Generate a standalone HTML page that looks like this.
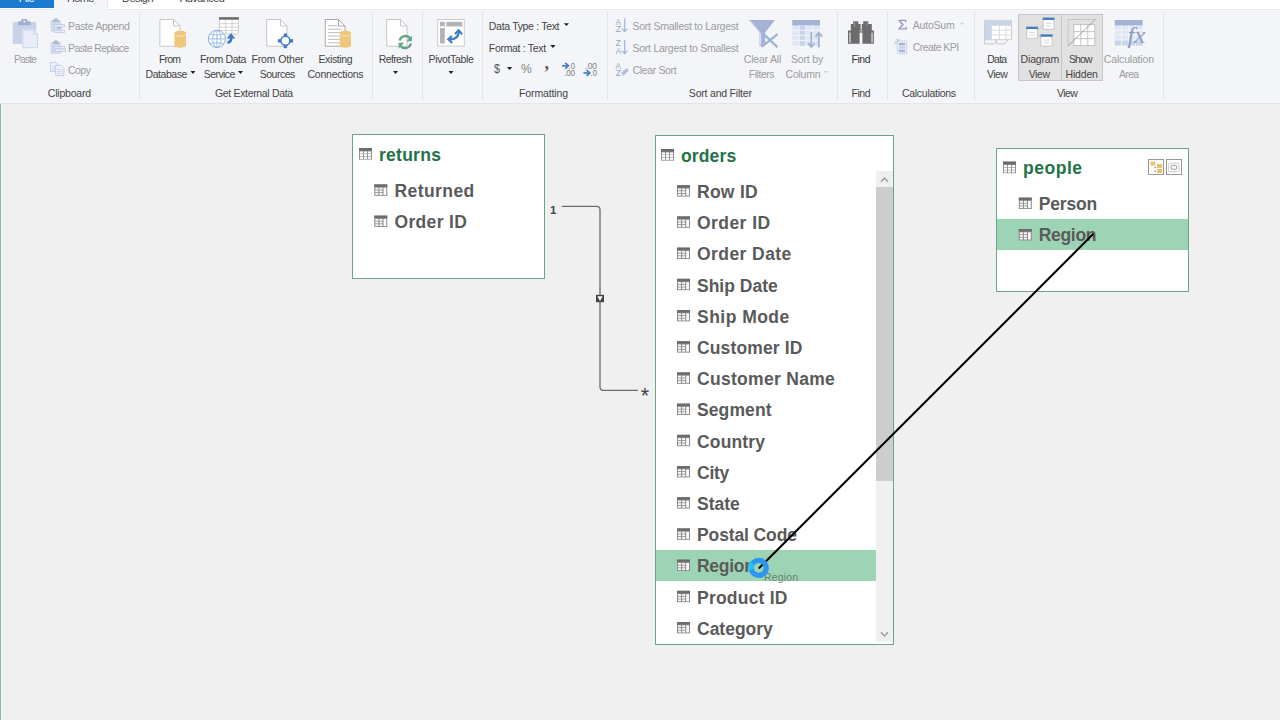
<!DOCTYPE html>
<html lang="en"><head><meta charset="utf-8"><title>Power Pivot - Diagram View</title>
<style>
html,body{margin:0;padding:0}
body{width:1280px;height:720px;overflow:hidden;background:#f0f0f0;position:relative;font-family:"Liberation Sans", sans-serif;}
.t,.g{position:absolute;white-space:pre;display:block}
.abs,svg.ic{position:absolute}
svg.ic{overflow:visible}
#tabs{position:absolute;left:0;top:0;width:1280px;height:9px;background:#fff;border-bottom:1px solid #e6e8eb}
#tab-file{position:absolute;left:0;top:0;width:54px;height:8px;background:#1a7ad0}
#tab-home{position:absolute;left:54px;top:0;width:53px;height:10px;background:#f3f5f8;border-right:1px solid #e6e8eb}
#ribbon{position:absolute;left:0;top:10px;width:1280px;height:93px;background:#f3f5f8;border-bottom:1px solid #e3e5e8}
.sep{position:absolute;top:12px;width:1px;height:88px;background:#e2e4e7}
.tog{position:absolute;top:14px;height:67px;background:#e1e1e1;border:1px solid #c6c6c6;box-sizing:border-box}
#canvas{position:absolute;left:0;top:104px;width:1280px;height:616px;background:#f0f0f0}
#edge{position:absolute;left:0;top:104px;width:1px;height:616px;background:#8fba9f}
#edge2{position:absolute;left:1px;top:104px;width:1px;height:616px;background:#f5f5f5}
.tbl{position:absolute;background:#fff;border:1px solid #6ba387;box-sizing:border-box}
.hl{position:absolute;background:#9dd4b5}
.sb{position:absolute;background:#f0f0f0}
.thumb{position:absolute;background:#cdcdcd}
.btn{position:absolute;box-sizing:border-box;border:1px solid #999;background:#fff}
</style></head>
<body>
<header id="tabstrip"><div id="tabs"></div><div id="tab-file"></div><div id="tab-home"></div>
<span class="t" style="left:18.75px;top:-7.69px;font-size:11px;line-height:13.75px;color:#ffffff;letter-spacing:-0.600px;">File</span>
<span class="t" style="left:67.00px;top:-7.69px;font-size:11px;line-height:13.75px;color:#444;letter-spacing:-0.675px;">Home</span>
<span class="t" style="left:122.00px;top:-7.69px;font-size:11px;line-height:13.75px;color:#444;letter-spacing:-0.540px;">Design</span>
<span class="t" style="left:180.00px;top:-7.69px;font-size:11px;line-height:13.75px;color:#444;letter-spacing:-0.591px;">Advanced</span>
</header>
<section id="ribbon-area"><div id="ribbon"></div>
<div class="sep" style="left:139px"></div>
<div class="sep" style="left:372px"></div>
<div class="sep" style="left:422px"></div>
<div class="sep" style="left:482px"></div>
<div class="sep" style="left:607px"></div>
<div class="sep" style="left:837px"></div>
<div class="sep" style="left:887px"></div>
<div class="sep" style="left:974px"></div>
<div class="sep" style="left:1163px"></div>
<div class="tog" style="left:1018px;width:44px"></div><div class="tog" style="left:1061px;width:42px"></div>
<svg class="ic " style="left:11px;top:17px" width="29" height="33" viewBox="11 17 29 33"><rect x="12.75" y="22" width="23.5" height="22" rx="0.8" fill="#c8d3ea"/><rect x="18" y="21.3" width="12.6" height="3.9" rx="0.8" fill="#9fafcd"/><rect x="21.3" y="19" width="6" height="4" rx="0.8" fill="#9fafcd"/><rect x="23.3" y="20.6" width="2" height="1.8" fill="#eef1f8"/><path d="M22.1 29.4H34.1L38.2 33.6V48.4H22.1Z" fill="#f3f5f8"/><path d="M22.9 30.2H33.6L37.5 34.1V47.7H22.9Z" fill="#e9edf9" stroke="#c8d3ea" stroke-width="0.9"/><path d="M33.6 30.2V34.1H37.5" fill="none" stroke="#c8d3ea" stroke-width="0.9"/></svg>
<svg class="ic " style="left:49px;top:17px" width="18" height="18" viewBox="49 17 18 18"><rect x="50.60" y="20.30" width="10.5" height="11.5" fill="#cfd9ec"/><rect x="52.90" y="19.70" width="6" height="2.2" fill="#a9b8d6"/><rect x="54.60" y="18.30" width="2.6" height="2" fill="#a9b8d6"/><rect x="54.30" y="24.20" width="10.50" height="3.20" fill="#bccae4"/><rect x="55.00" y="25.00" width="1.88" height="1.60" fill="#f1f4fb"/><rect x="57.38" y="25.00" width="1.88" height="1.60" fill="#f1f4fb"/><rect x="59.75" y="25.00" width="1.88" height="1.60" fill="#f1f4fb"/><rect x="62.12" y="25.00" width="1.88" height="1.60" fill="#f1f4fb"/><rect x="54.30" y="29.80" width="10.50" height="3.20" fill="#bccae4"/><rect x="55.00" y="30.60" width="1.88" height="1.60" fill="#f1f4fb"/><rect x="57.38" y="30.60" width="1.88" height="1.60" fill="#f1f4fb"/><rect x="59.75" y="30.60" width="1.88" height="1.60" fill="#f1f4fb"/><rect x="62.12" y="30.60" width="1.88" height="1.60" fill="#f1f4fb"/><path d="M56.6 27.6H62.2L59.4 29.6Z" fill="#a9b8d6"/></svg>
<svg class="ic " style="left:49px;top:39px" width="18" height="16" viewBox="49 39 18 16"><rect x="50.60" y="42.30" width="10.5" height="11.5" fill="#cfd9ec"/><rect x="52.90" y="41.70" width="6" height="2.2" fill="#a9b8d6"/><rect x="54.60" y="40.30" width="2.6" height="2" fill="#a9b8d6"/><rect x="54.30" y="46.00" width="10.50" height="3.20" fill="#bccae4"/><rect x="55.00" y="46.80" width="1.88" height="1.60" fill="#f1f4fb"/><rect x="57.38" y="46.80" width="1.88" height="1.60" fill="#f1f4fb"/><rect x="59.75" y="46.80" width="1.88" height="1.60" fill="#f1f4fb"/><rect x="62.12" y="46.80" width="1.88" height="1.60" fill="#f1f4fb"/><rect x="55.30" y="48.60" width="10.50" height="3.20" fill="#bccae4"/><rect x="56.00" y="49.40" width="1.88" height="1.60" fill="#f1f4fb"/><rect x="58.38" y="49.40" width="1.88" height="1.60" fill="#f1f4fb"/><rect x="60.75" y="49.40" width="1.88" height="1.60" fill="#f1f4fb"/><rect x="63.12" y="49.40" width="1.88" height="1.60" fill="#f1f4fb"/></svg>
<svg class="ic " style="left:49px;top:61px" width="17" height="16" viewBox="49 61 17 16"><path d="M50.40 62.40H55.60L58.60 65.40V71.60H50.40Z" fill="#eef1fa" stroke="#bfcbe4" stroke-width="0.9"/><path d="M51.90 66.60H57.10" stroke="#c9d3e9" stroke-width="0.8"/><path d="M51.90 68.50H57.10" stroke="#c9d3e9" stroke-width="0.8"/><path d="M51.90 70.40H57.10" stroke="#c9d3e9" stroke-width="0.8"/><path d="M55.60 65.40H60.80L63.80 68.40V75.60H55.60Z" fill="#eef1fa" stroke="#bfcbe4" stroke-width="0.9"/><path d="M57.10 69.60H62.30" stroke="#c9d3e9" stroke-width="0.8"/><path d="M57.10 71.50H62.30" stroke="#c9d3e9" stroke-width="0.8"/><path d="M57.10 73.40H62.30" stroke="#c9d3e9" stroke-width="0.8"/></svg>
<svg class="ic " style="left:158px;top:17px" width="30" height="32" viewBox="158 17 30 32"><path d="M159.90 19.50H173.50L180.00 26.00V46.20H159.90Z" fill="#ffffff" stroke="#c6c6c6" stroke-width="1"/><path d="M173.50 19.50V26.00H180.00" fill="none" stroke="#c6c6c6" stroke-width="1"/><path d="M174.40 33.10V45.40A5.80 2.40 0 0 0 186.00 45.40V33.10A5.80 2.40 0 0 0 174.40 33.10Z" fill="#eec77a"/><ellipse cx="180.20" cy="33.10" rx="5.80" ry="2.40" fill="#eec77a"/><path d="M174.40 33.70A5.80 2.40 0 0 0 186.00 33.70" fill="none" stroke="#fbeccb" stroke-width="0.8"/></svg>
<svg class="ic " style="left:207px;top:15px" width="33" height="34" viewBox="207 15 33 34"><rect x="219.50" y="17.60" width="18.80" height="16.40" fill="#fff" stroke="#c9c9c9" stroke-width="0.9"/><rect x="219.05" y="17.15" width="19.70" height="2.60" fill="#6e6e6e"/><path d="M219.50 23.65H238.30" stroke="#c9c9c9" stroke-width="0.8"/><path d="M219.50 27.10H238.30" stroke="#c9c9c9" stroke-width="0.8"/><path d="M219.50 30.55H238.30" stroke="#c9c9c9" stroke-width="0.8"/><path d="M225.77 20.20V34.00" stroke="#c9c9c9" stroke-width="0.8"/><path d="M232.03 20.20V34.00" stroke="#c9c9c9" stroke-width="0.8"/><circle cx="216.9" cy="38.9" r="8.6" fill="#fbfdff" stroke="#79a4d9" stroke-width="0.9"/><ellipse cx="216.9" cy="38.9" rx="4.1" ry="8.6" fill="none" stroke="#8ab0de" stroke-width="0.8"/><path d="M216.9 30.3V47.5M208.3 38.9H225.5M210 34.2Q216.9 36 223.8 34.2M210 43.6Q216.9 41.8 223.8 43.6" fill="none" stroke="#8ab0de" stroke-width="0.8"/><path d="M227.4 42.6C230.4 42.4 231.4 40.6 231.2 36.6" fill="none" stroke="#3c79bd" stroke-width="2.7"/><path d="M226.8 38.6L231 33L235.2 38.6Z" fill="#3c79bd"/></svg>
<svg class="ic " style="left:265px;top:17px" width="30" height="33" viewBox="265 17 30 33"><path d="M266.70 19.50H280.50L287.00 26.00V46.20H266.70Z" fill="#ffffff" stroke="#c6c6c6" stroke-width="1"/><path d="M280.50 19.50V26.00H287.00" fill="none" stroke="#c6c6c6" stroke-width="1"/><circle cx="285.4" cy="40.8" r="4.5" fill="#fff" stroke="#3f7cc4" stroke-width="1.5"/><rect x="283.7" y="33.5" width="3.4" height="3.2" fill="#3f7cc4"/><rect x="283.7" y="45" width="3.4" height="3.2" fill="#3f7cc4"/><rect x="277.8" y="39.2" width="3.2" height="3.3" fill="#3f7cc4"/><rect x="289.8" y="39.2" width="3.2" height="3.3" fill="#3f7cc4"/></svg>
<svg class="ic " style="left:323px;top:17px" width="30" height="33" viewBox="323 17 30 33"><path d="M325.30 19.50H338.50L345.00 26.00V46.20H325.30Z" fill="#ffffff" stroke="#a8a8a8" stroke-width="1"/><path d="M338.50 19.50V26.00H345.00" fill="none" stroke="#a8a8a8" stroke-width="1"/><path d="M327.8 25.8H337.5" stroke="#c2c2c2" stroke-width="1.1"/><path d="M327.8 29.2H341.5" stroke="#c2c2c2" stroke-width="1.1"/><path d="M327.8 32.6H341.5" stroke="#c2c2c2" stroke-width="1.1"/><path d="M327.8 36.0H341.5" stroke="#c2c2c2" stroke-width="1.1"/><path d="M327.8 39.4H341.5" stroke="#c2c2c2" stroke-width="1.1"/><path d="M327.8 42.8H341.5" stroke="#c2c2c2" stroke-width="1.1"/><path d="M339.80 33.10V45.40A5.60 2.40 0 0 0 351.00 45.40V33.10A5.60 2.40 0 0 0 339.80 33.10Z" fill="#eec77a"/><ellipse cx="345.40" cy="33.10" rx="5.60" ry="2.40" fill="#eec77a"/><path d="M339.80 33.70A5.60 2.40 0 0 0 351.00 33.70" fill="none" stroke="#fbeccb" stroke-width="0.8"/></svg>
<svg class="ic " style="left:385px;top:17px" width="29" height="33" viewBox="385 17 29 33"><path d="M386.70 19.50H400.50L407.00 26.00V46.20H386.70Z" fill="#ffffff" stroke="#c6c6c6" stroke-width="1"/><path d="M400.50 19.50V26.00H407.00" fill="none" stroke="#c6c6c6" stroke-width="1"/><path d="M399.6 40.6A6 6 0 0 1 410.2 38.4" fill="none" stroke="#5fa588" stroke-width="2.3"/><path d="M411.9 35.6V41.2H406.3Z" fill="#5fa588"/><path d="M410.9 43.6A6 6 0 0 1 400.3 45.8" fill="none" stroke="#5fa588" stroke-width="2.3"/><path d="M398.6 48.4V42.8H404.2Z" fill="#5fa588"/></svg>
<svg class="ic " style="left:436px;top:18px" width="30" height="30" viewBox="436 18 30 30"><rect x="437.7" y="19.5" width="26.6" height="26.6" fill="#fff" stroke="#cdcdcd" stroke-width="1"/><rect x="440" y="21.8" width="4.8" height="4.6" fill="#b3b3b3"/><rect x="446.3" y="21.8" width="16" height="4.6" fill="#b3b3b3"/><rect x="440" y="28" width="4.8" height="15.5" fill="#b3b3b3"/><path d="M449.4 39.3C455.6 39.6 458.9 36.6 458.6 31.2" fill="none" stroke="#3f7cc4" stroke-width="2.2"/><path d="M454.9 33.9L458.7 30.2L462.1 34.2" fill="none" stroke="#3f7cc4" stroke-width="2.1"/><path d="M451.9 35.9L448.2 39.3L452.2 42.9" fill="none" stroke="#3f7cc4" stroke-width="2.1"/></svg>
<svg class="ic " style="left:561px;top:61px" width="16" height="16" viewBox="561 61 16 16"><path d="M562.1 65.8H567.7" stroke="#3f7fc1" stroke-width="1.7"/><path d="M565.3 62.9L568.5 65.8L565.3 68.7" fill="none" stroke="#3f7fc1" stroke-width="1.7"/><text x="568.5" y="68.8" font-size="9.8" fill="#808080" font-family="Liberation Sans, sans-serif" textLength="6.6" lengthAdjust="spacingAndGlyphs">.0</text><text x="563.9" y="75.9" font-size="9.8" fill="#808080" font-family="Liberation Sans, sans-serif" textLength="11.2" lengthAdjust="spacingAndGlyphs">.00</text></svg>
<svg class="ic " style="left:582px;top:61px" width="17" height="16" viewBox="582 61 17 16"><text x="585.3" y="68.8" font-size="9.8" fill="#808080" font-family="Liberation Sans, sans-serif" textLength="11.8" lengthAdjust="spacingAndGlyphs">.00</text><path d="M583.4 73.0H589.0" stroke="#3f7fc1" stroke-width="1.7"/><path d="M586.6 70.1L589.8 73.0L586.6 75.9" fill="none" stroke="#3f7fc1" stroke-width="1.7"/><text x="590.6" y="75.9" font-size="9.8" fill="#808080" font-family="Liberation Sans, sans-serif" textLength="6.6" lengthAdjust="spacingAndGlyphs">.0</text></svg>
<svg class="ic " style="left:614px;top:17px" width="16" height="17" viewBox="614 17 16 17"><text x="615.6" y="24.5" font-family="Liberation Sans, sans-serif" font-size="8.8" fill="#93a5cb" textLength="5.4" lengthAdjust="spacingAndGlyphs">A</text><text x="615.7" y="32.1" font-family="Liberation Sans, sans-serif" font-size="8.8" fill="#93a5cb" textLength="5.4" lengthAdjust="spacingAndGlyphs">Z</text><path d="M624.70 18.20V31.50" stroke="#a3b3d3" stroke-width="1.2"/><path d="M621.90 28.70L624.70 31.60L627.50 28.70" fill="none" stroke="#a3b3d3" stroke-width="1.2"/></svg>
<svg class="ic " style="left:614px;top:39px" width="16" height="17" viewBox="614 39 16 17"><text x="615.6" y="46.4" font-family="Liberation Sans, sans-serif" font-size="8.8" fill="#93a5cb" textLength="5.4" lengthAdjust="spacingAndGlyphs">Z</text><text x="615.7" y="54.0" font-family="Liberation Sans, sans-serif" font-size="8.8" fill="#93a5cb" textLength="5.4" lengthAdjust="spacingAndGlyphs">A</text><path d="M624.70 40.10V53.50" stroke="#a3b3d3" stroke-width="1.2"/><path d="M621.90 50.70L624.70 53.60L627.50 50.70" fill="none" stroke="#a3b3d3" stroke-width="1.2"/></svg>
<svg class="ic " style="left:614px;top:61px" width="16" height="17" viewBox="614 61 16 17"><text x="615.6" y="68.5" font-family="Liberation Sans, sans-serif" font-size="8.8" fill="#93a5cb" textLength="5.4" lengthAdjust="spacingAndGlyphs">A</text><text x="615.7" y="76.1" font-family="Liberation Sans, sans-serif" font-size="8.8" fill="#93a5cb" textLength="5.4" lengthAdjust="spacingAndGlyphs">Z</text><path d="M621.0 73.0L626.6 68.0L628.9 70.6L623.4 75.8Z" fill="#b4c1dd"/></svg>
<svg class="ic " style="left:747px;top:18px" width="33" height="32" viewBox="747 18 33 32"><path d="M748.8 20H775L765.2 32.4V43.2L759.6 46.4V32.4Z" fill="#a3b3d3"/><path d="M749.8 20.6L760.6 33.4V45" fill="none" stroke="#e4e9f5" stroke-width="0.9"/><path d="M763.2 33.6L777.4 47.2" stroke="#a3b3d3" stroke-width="2.3"/><path d="M777.6 34.2L761.6 46.8" stroke="#a3b3d3" stroke-width="2.3"/></svg>
<svg class="ic " style="left:791px;top:19px" width="33" height="30" viewBox="791 19 33 30"><rect x="792.3" y="20" width="27.7" height="25.6" fill="#dfe6f5"/><rect x="792.3" y="20" width="27.7" height="5.4" fill="#a3b3d3"/><rect x="799.2" y="25.4" width="6.6" height="20.2" fill="#c9d4ea"/><path d="M792.3 30.4H820" stroke="#f3f6fc" stroke-width="0.9"/><path d="M792.3 35.4H820" stroke="#f3f6fc" stroke-width="0.9"/><path d="M792.3 40.4H820" stroke="#f3f6fc" stroke-width="0.9"/><path d="M799.2 25.4V45.6" stroke="#f3f6fc" stroke-width="0.9"/><path d="M805.8 25.4V45.6" stroke="#f3f6fc" stroke-width="0.9"/><path d="M812.6 25.4V45.6" stroke="#f3f6fc" stroke-width="0.9"/><path d="M811.3 32V46.6" stroke="#a3b3d3" stroke-width="1.9"/><path d="M807.9 43.2L811.3 46.8L814.7 43.2" fill="none" stroke="#a3b3d3" stroke-width="1.9"/><path d="M818.8 47.4V33" stroke="#a3b3d3" stroke-width="1.9"/><path d="M815.3 36.6L818.8 32.8L822.3 36.6" fill="none" stroke="#a3b3d3" stroke-width="1.9"/></svg>
<svg class="ic " style="left:847px;top:20px" width="28" height="26" viewBox="847 20 28 26"><path d="M853.2 21.2H858.3V24H860.6V30H859.6V43.7H848V30.4H850.8V24H853.2Z" fill="#6c6c6c"/><path d="M863.2 21.2H868.3V24H871.8V30.4H873.9V43.7H862.4V30H861.8V24H863.2Z" fill="#6c6c6c"/><rect x="859" y="29.2" width="4" height="3.4" fill="#6c6c6c"/><rect x="859.6" y="30.3" width="2.8" height="1" fill="#e2e2e2"/><rect x="849.2" y="32.6" width="1.5" height="10" fill="#cfcfcf"/><rect x="871.3" y="32.6" width="1.5" height="10" fill="#cfcfcf"/><rect x="854.2" y="22.2" width="0.9" height="4" fill="#9a9a9a"/><rect x="866.6" y="22.2" width="0.9" height="4" fill="#9a9a9a"/></svg>
<svg class="ic " style="left:896px;top:17px" width="13" height="15" viewBox="896 17 13 15"><path d="M898.4 19.8H906.4V22.2H905.4L905 21H900.6L903.8 24.6L900.4 28.2H905.2L905.8 26.8H906.8V29.6H898.2V28.8L901.8 24.7L898.4 20.6Z" fill="#8a9cc0"/></svg>
<svg class="ic " style="left:893px;top:37px" width="15" height="18" viewBox="893 37 15 18"><rect x="897.2" y="41" width="9.6" height="12.8" rx="0.8" fill="#e6ebf7" stroke="#c8d3ea" stroke-width="0.9"/><rect x="899" y="43" width="6" height="2.4" fill="#a3b3d3"/><rect x="899" y="46.6" width="6" height="2" fill="#c3cfe7"/><rect x="899" y="49.8" width="6" height="2.2" fill="#a3b3d3"/><path d="M894.6 41.4L897.2 42.4M896.4 38.8L897.6 41.2M898.8 38.6L898.6 40.8M894.4 43.8L896.6 43.6" stroke="#a3b3d3" stroke-width="0.8"/></svg>
<svg class="ic " style="left:983px;top:19px" width="30" height="27" viewBox="983 19 30 27"><rect x="984.5" y="20.3" width="27" height="19.4" fill="#fff" stroke="#c9c9c9" stroke-width="0.9"/><rect x="985" y="20.8" width="26" height="4.6" fill="#c5d5ec"/><rect x="985" y="25.4" width="6.4" height="14" fill="#c5d5ec"/><path d="M985 25.4H1011" stroke="#d4d4d4" stroke-width="0.8"/><path d="M985 30.2H1011" stroke="#d4d4d4" stroke-width="0.8"/><path d="M985 35.0H1011" stroke="#d4d4d4" stroke-width="0.8"/><path d="M991.4 20.8V39.6" stroke="#d4d4d4" stroke-width="0.8"/><path d="M999.4 20.8V39.6" stroke="#d4d4d4" stroke-width="0.8"/><path d="M1006.0 20.8V39.6" stroke="#d4d4d4" stroke-width="0.8"/><path d="M984.5 39.7V43.9H993.6L996.8 39.9M996.4 39.7V43.9H1004.8L1008 39.9" fill="none" stroke="#c4c4c4" stroke-width="0.9"/></svg>
<svg class="ic " style="left:1025px;top:16px" width="31" height="32" viewBox="1025 16 31 32"><path d="M1037.8 30.4L1043 25M1037.8 34.6L1040.8 38" stroke="#bdbdbd" stroke-width="0.9"/><rect x="1026.70" y="27.20" width="10.70" height="11.00" fill="#fff" stroke="#c4c4c4" stroke-width="0.9"/><rect x="1026.25" y="26.75" width="11.60" height="2.3" fill="#3f7cc4"/><path d="M1029.30 32.40H1034.80M1029.30 35.20H1034.80" stroke="#c9c9c9" stroke-width="0.8"/><rect x="1043.20" y="18.10" width="10.80" height="11.10" fill="#fff" stroke="#c4c4c4" stroke-width="0.9"/><rect x="1042.75" y="17.65" width="11.70" height="2.3" fill="#3f7cc4"/><path d="M1045.80 23.30H1051.40M1045.80 26.10H1051.40" stroke="#c9c9c9" stroke-width="0.8"/><rect x="1041.00" y="34.90" width="11.10" height="11.10" fill="#fff" stroke="#c4c4c4" stroke-width="0.9"/><rect x="1040.55" y="34.45" width="12.00" height="2.3" fill="#3f7cc4"/><path d="M1043.60 40.10H1049.50M1043.60 42.90H1049.50" stroke="#c9c9c9" stroke-width="0.8"/></svg>
<svg class="ic " style="left:1067px;top:18px" width="30" height="29" viewBox="1067 18 30 29"><path d="M1068.2 46V19.5H1095.4" fill="none" stroke="#ababab" stroke-width="0.8" stroke-dasharray="1.4 0.9"/><rect x="1073.8" y="24.6" width="21" height="21" fill="#fff" stroke="#bdbdbd" stroke-width="0.9"/><path d="M1080.8 24.6V45.6M1073.8 31.6H1094.8" stroke="#bdbdbd" stroke-width="0.9"/><path d="M1087.8 24.6V45.6M1073.8 38.6H1094.8" stroke="#bdbdbd" stroke-width="0.9"/><path d="M1067.9 46.1L1095.6 19.2" stroke="#9a9a9a" stroke-width="0.9"/></svg>
<svg class="ic " style="left:1113px;top:19px" width="34" height="31" viewBox="1113 19 34 31"><rect x="1114.8" y="20" width="27.8" height="25.4" fill="#dfe6f5"/><rect x="1114.8" y="20" width="27.8" height="5.4" fill="#a3b3d3"/><rect x="1114.8" y="40" width="27.8" height="5.4" fill="#c9d4ea"/><path d="M1114.8 30.2H1142.6" stroke="#f3f6fc" stroke-width="0.9"/><path d="M1114.8 35.0H1142.6" stroke="#f3f6fc" stroke-width="0.9"/><path d="M1114.8 40.0H1142.6" stroke="#f3f6fc" stroke-width="0.9"/><path d="M1121.6 25.4V45.4" stroke="#f3f6fc" stroke-width="0.9"/><path d="M1128.6 25.4V45.4" stroke="#f3f6fc" stroke-width="0.9"/><path d="M1135.6 25.4V45.4" stroke="#f3f6fc" stroke-width="0.9"/><text x="1127.4" y="43" font-family="Liberation Serif, serif" font-style="italic" font-size="23" fill="#8a9cc0" textLength="18" lengthAdjust="spacingAndGlyphs">fx</text></svg>
<svg class="ic dd" style="left:189px;top:70px" width="8" height="6" viewBox="189 70 8 6"><path d="M190.60 71.00H195.30L192.95 74.00Z" fill="#222"/></svg>
<svg class="ic dd" style="left:237px;top:70px" width="8" height="6" viewBox="237 70 8 6"><path d="M238.00 71.00H243.00L240.50 74.00Z" fill="#222"/></svg>
<svg class="ic dd" style="left:392px;top:70px" width="8" height="6" viewBox="392 70 8 6"><path d="M393.00 71.00H398.00L395.50 74.00Z" fill="#222"/></svg>
<svg class="ic dd" style="left:447px;top:70px" width="8" height="6" viewBox="447 70 8 6"><path d="M448.50 71.00H453.50L451.00 74.00Z" fill="#222"/></svg>
<svg class="ic dd" style="left:562px;top:22px" width="8" height="6" viewBox="562 22 8 6"><path d="M563.80 23.30H569.00L566.40 26.10Z" fill="#222"/></svg>
<svg class="ic dd" style="left:549px;top:44px" width="8" height="6" viewBox="549 44 8 6"><path d="M550.20 45.10H555.60L552.90 48.00Z" fill="#222"/></svg>
<svg class="ic dd" style="left:505px;top:66px" width="8" height="6" viewBox="505 66 8 6"><path d="M506.90 67.00H512.30L509.60 70.00Z" fill="#222"/></svg>
<svg class="ic dd" style="left:822px;top:70px" width="8" height="6" viewBox="822 70 8 6"><path d="M823.80 71.00H828.00L825.90 73.20Z" fill="#cfcfcf"/></svg>
<svg class="ic dd" style="left:958px;top:21px" width="8" height="6" viewBox="958 21 8 6"><path d="M959.80 22.80H964.00L961.90 25.00Z" fill="#cfcfcf"/></svg>
<span class="t" style="left:14.00px;top:53.40px;font-size:10.5px;line-height:13.12px;color:#9c9c9c;letter-spacing:-1.013px;">Paste</span>
<span class="t" style="left:68.00px;top:19.80px;font-size:10.5px;line-height:13.12px;color:#9c9c9c;letter-spacing:-0.327px;">Paste Append</span>
<span class="t" style="left:68.00px;top:41.80px;font-size:10.5px;line-height:13.12px;color:#9c9c9c;letter-spacing:-0.585px;">Paste Replace</span>
<span class="t" style="left:68.00px;top:63.80px;font-size:10.5px;line-height:13.12px;color:#9c9c9c;letter-spacing:-0.540px;">Copy</span>
<span class="t" style="left:47.75px;top:86.80px;font-size:10.5px;line-height:13.12px;color:#444444;letter-spacing:-0.197px;">Clipboard</span>
<span class="t" style="left:159.00px;top:53.40px;font-size:10.5px;line-height:13.12px;color:#444444;letter-spacing:-0.825px;">From</span>
<span class="t" style="left:145.60px;top:68.40px;font-size:10.5px;line-height:13.12px;color:#444444;letter-spacing:-0.463px;">Database</span>
<span class="t" style="left:200.00px;top:53.40px;font-size:10.5px;line-height:13.12px;color:#444444;letter-spacing:-0.394px;">From Data</span>
<span class="t" style="left:203.75px;top:68.40px;font-size:10.5px;line-height:13.12px;color:#444444;letter-spacing:-0.562px;">Service</span>
<span class="t" style="left:251.50px;top:53.40px;font-size:10.5px;line-height:13.12px;color:#444444;letter-spacing:-0.150px;">From Other</span>
<span class="t" style="left:259.75px;top:68.40px;font-size:10.5px;line-height:13.12px;color:#444444;letter-spacing:-0.503px;">Sources</span>
<span class="t" style="left:318.50px;top:53.40px;font-size:10.5px;line-height:13.12px;color:#444444;letter-spacing:-0.386px;">Existing</span>
<span class="t" style="left:307.50px;top:68.40px;font-size:10.5px;line-height:13.12px;color:#444444;letter-spacing:-0.225px;">Connections</span>
<span class="t" style="left:215.00px;top:86.80px;font-size:10.5px;line-height:13.12px;color:#444444;letter-spacing:-0.338px;">Get External Data</span>
<span class="t" style="left:378.86px;top:53.40px;font-size:10.5px;line-height:13.12px;color:#444444;letter-spacing:-0.644px;">Refresh</span>
<span class="t" style="left:428.50px;top:53.40px;font-size:10.5px;line-height:13.12px;color:#444444;letter-spacing:-0.350px;">PivotTable</span>
<span class="t" style="left:488.86px;top:19.80px;font-size:10.5px;line-height:13.12px;color:#444444;letter-spacing:-0.324px;">Data Type : Text</span>
<span class="t" style="left:488.86px;top:41.80px;font-size:10.5px;line-height:13.12px;color:#444444;letter-spacing:-0.322px;">Format : Text</span>
<span class="t" style="left:493.50px;top:61.28px;font-size:13.5px;line-height:16.88px;color:#555;transform:scaleX(0.8);transform-origin:0 0;">$</span>
<span class="t" style="left:521.00px;top:61.74px;font-size:12px;line-height:15.0px;color:#808080;">%</span>
<span class="t" style="left:519.00px;top:86.80px;font-size:10.5px;line-height:13.12px;color:#444444;letter-spacing:-0.125px;">Formatting</span>
<span class="t" style="left:632.50px;top:19.80px;font-size:10.5px;line-height:13.12px;color:#9c9c9c;letter-spacing:-0.254px;">Sort Smallest to Largest</span>
<span class="t" style="left:632.50px;top:41.80px;font-size:10.5px;line-height:13.12px;color:#9c9c9c;letter-spacing:-0.254px;">Sort Largest to Smallest</span>
<span class="t" style="left:632.50px;top:63.80px;font-size:10.5px;line-height:13.12px;color:#9c9c9c;letter-spacing:-0.350px;">Clear Sort</span>
<span class="t" style="left:688.86px;top:86.80px;font-size:10.5px;line-height:13.12px;color:#444444;letter-spacing:-0.205px;">Sort and Filter</span>
<span class="t" style="left:743.75px;top:53.40px;font-size:10.5px;line-height:13.12px;color:#9c9c9c;letter-spacing:-0.197px;">Clear All</span>
<span class="t" style="left:748.86px;top:68.40px;font-size:10.5px;line-height:13.12px;color:#9c9c9c;letter-spacing:-0.494px;">Filters</span>
<span class="t" style="left:791.00px;top:53.40px;font-size:10.5px;line-height:13.12px;color:#9c9c9c;letter-spacing:-0.188px;">Sort by</span>
<span class="t" style="left:785.60px;top:68.40px;font-size:10.5px;line-height:13.12px;color:#9c9c9c;letter-spacing:-0.243px;">Column</span>
<span class="t" style="left:851.50px;top:53.40px;font-size:10.5px;line-height:13.12px;color:#333;letter-spacing:-0.450px;">Find</span>
<span class="t" style="left:851.50px;top:86.80px;font-size:10.5px;line-height:13.12px;color:#444444;letter-spacing:-0.450px;">Find</span>
<span class="t" style="left:912.75px;top:18.80px;font-size:10.5px;line-height:13.12px;color:#9c9c9c;letter-spacing:-0.203px;">AutoSum</span>
<span class="t" style="left:912.75px;top:41.40px;font-size:10.5px;line-height:13.12px;color:#9c9c9c;letter-spacing:-0.550px;">Create KPI</span>
<span class="t" style="left:901.90px;top:86.80px;font-size:10.5px;line-height:13.12px;color:#444444;letter-spacing:-0.270px;">Calculations</span>
<span class="t" style="left:987.25px;top:53.40px;font-size:10.5px;line-height:13.12px;color:#444444;letter-spacing:-0.750px;">Data</span>
<span class="t" style="left:986.90px;top:68.40px;font-size:10.5px;line-height:13.12px;color:#444444;letter-spacing:-0.570px;">View</span>
<span class="t" style="left:1020.60px;top:53.40px;font-size:10.5px;line-height:13.12px;color:#444444;letter-spacing:-0.165px;">Diagram</span>
<span class="t" style="left:1028.75px;top:68.40px;font-size:10.5px;line-height:13.12px;color:#444444;letter-spacing:-0.450px;">View</span>
<span class="t" style="left:1069.00px;top:53.40px;font-size:10.5px;line-height:13.12px;color:#444444;letter-spacing:-0.900px;">Show</span>
<span class="t" style="left:1065.60px;top:68.40px;font-size:10.5px;line-height:13.12px;color:#444444;letter-spacing:-0.198px;">Hidden</span>
<span class="t" style="left:1103.86px;top:53.40px;font-size:10.5px;line-height:13.12px;color:#9c9c9c;letter-spacing:-0.180px;">Calculation</span>
<span class="t" style="left:1119.00px;top:68.40px;font-size:10.5px;line-height:13.12px;color:#9c9c9c;letter-spacing:-0.660px;">Area</span>
<span class="t" style="left:1056.90px;top:86.80px;font-size:10.5px;line-height:13.12px;color:#444444;letter-spacing:-0.570px;">View</span>
<span class="g" style="left:544.4px;top:51.6px;font-size:18px;line-height:22px;font-weight:bold;color:#5c5c5c;font-family:'Liberation Serif',serif">,</span>
</section>
<main id="diagram-area"><div id="canvas"></div><div id="edge"></div><div id="edge2"></div>
<div class="tbl" id="tbl-returns" style="left:352px;top:134px;width:193px;height:145px"></div>
<div class="tbl" id="tbl-orders" style="left:655px;top:135px;width:239px;height:510px"></div>
<div class="tbl" id="tbl-people" style="left:996px;top:148px;width:193px;height:144px"></div>
<div class="hl" style="left:656px;top:550px;width:220px;height:31px"></div>
<div class="hl" style="left:997px;top:219px;width:191px;height:31px"></div>
<div class="sb" style="left:876px;top:171px;width:17px;height:471px"></div>
<div class="thumb" style="left:876px;top:187px;width:17px;height:294px"></div>
<div class="btn" style="left:1148px;top:159px;width:16px;height:16px"></div>
<div class="btn" style="left:1166px;top:159px;width:16px;height:16px"></div>
<span class="t" style="left:379.00px;top:145.00px;font-size:17.5px;line-height:21.88px;color:#217346;font-weight:bold;letter-spacing:0.262px;">returns</span>
<span class="t" style="left:394.50px;top:181.00px;font-size:17.5px;line-height:21.88px;color:#5a5a5a;font-weight:bold;letter-spacing:0.418px;">Returned</span>
<span class="t" style="left:394.50px;top:212.00px;font-size:17.5px;line-height:21.88px;color:#5a5a5a;font-weight:bold;letter-spacing:0.321px;">Order ID</span>
<span class="t" style="left:681.00px;top:146.00px;font-size:17.5px;line-height:21.88px;color:#217346;font-weight:bold;letter-spacing:0.144px;">orders</span>
<span class="t" style="left:697.00px;top:182.10px;font-size:17.5px;line-height:21.88px;color:#5a5a5a;font-weight:bold;letter-spacing:0.270px;">Row ID</span>
<span class="t" style="left:697.00px;top:213.30px;font-size:17.5px;line-height:21.88px;color:#5a5a5a;font-weight:bold;letter-spacing:0.437px;">Order ID</span>
<span class="t" style="left:697.00px;top:243.50px;font-size:17.5px;line-height:21.88px;color:#5a5a5a;font-weight:bold;letter-spacing:0.430px;">Order Date</span>
<span class="t" style="left:697.00px;top:275.70px;font-size:17.5px;line-height:21.88px;color:#5a5a5a;font-weight:bold;">Ship Date</span>
<span class="t" style="left:697.00px;top:306.90px;font-size:17.5px;line-height:21.88px;color:#5a5a5a;font-weight:bold;letter-spacing:0.473px;">Ship Mode</span>
<span class="t" style="left:697.00px;top:338.10px;font-size:17.5px;line-height:21.88px;color:#5a5a5a;font-weight:bold;letter-spacing:0.135px;">Customer ID</span>
<span class="t" style="left:697.00px;top:369.30px;font-size:17.5px;line-height:21.88px;color:#5a5a5a;font-weight:bold;letter-spacing:0.300px;">Customer Name</span>
<span class="t" style="left:697.00px;top:399.50px;font-size:17.5px;line-height:21.88px;color:#5a5a5a;font-weight:bold;letter-spacing:0.105px;">Segment</span>
<span class="t" style="left:697.00px;top:431.70px;font-size:17.5px;line-height:21.88px;color:#5a5a5a;font-weight:bold;letter-spacing:0.150px;">Country</span>
<span class="t" style="left:697.00px;top:462.90px;font-size:17.5px;line-height:21.88px;color:#5a5a5a;font-weight:bold;letter-spacing:-0.240px;">City</span>
<span class="t" style="left:697.00px;top:494.10px;font-size:17.5px;line-height:21.88px;color:#5a5a5a;font-weight:bold;">State</span>
<span class="t" style="left:697.00px;top:525.30px;font-size:17.5px;line-height:21.88px;color:#5a5a5a;font-weight:bold;letter-spacing:-0.117px;">Postal Code</span>
<span class="t" style="left:697.00px;top:555.50px;font-size:17.5px;line-height:21.88px;color:#5a5a5a;font-weight:bold;letter-spacing:-0.270px;">Region</span>
<span class="t" style="left:697.00px;top:587.70px;font-size:17.5px;line-height:21.88px;color:#5a5a5a;font-weight:bold;letter-spacing:0.220px;">Product ID</span>
<span class="t" style="left:697.00px;top:618.90px;font-size:17.5px;line-height:21.88px;color:#5a5a5a;font-weight:bold;">Category</span>
<span class="t" style="left:1023.00px;top:158.30px;font-size:17.5px;line-height:21.88px;color:#217346;font-weight:bold;letter-spacing:0.540px;">people</span>
<span class="t" style="left:1038.75px;top:193.60px;font-size:17.5px;line-height:21.88px;color:#5a5a5a;font-weight:bold;letter-spacing:-0.180px;">Person</span>
<span class="t" style="left:1038.75px;top:225.00px;font-size:17.5px;line-height:21.88px;color:#5a5a5a;font-weight:bold;letter-spacing:-0.315px;">Region</span>
<span class="t" style="left:550.00px;top:202.83px;font-size:11.5px;line-height:14.38px;color:#444;font-weight:bold;">1</span>
<span class="t" style="left:640.86px;top:383.31px;font-size:21.5px;line-height:26.88px;color:#444;">*</span>
<span class="t" style="left:764.00px;top:571.20px;font-size:10.5px;line-height:13.12px;color:#64836f;letter-spacing:0.144px;">Region</span>
<svg class="ic" id="diagram" style="left:0;top:104px" width="1280" height="616" viewBox="0 104 1280 616"><rect x="359.00" y="148.00" width="13" height="11.6" fill="#8e8e8e"/><rect x="359.00" y="148.00" width="13" height="2.7" fill="#6c6c6c"/><rect x="359.95" y="151.45" width="3.1" height="2.1" fill="#fff"/><rect x="363.95" y="151.45" width="3.1" height="2.1" fill="#fff"/><rect x="367.95" y="151.45" width="3.1" height="2.1" fill="#fff"/><rect x="359.95" y="154.10" width="3.1" height="2.1" fill="#fff"/><rect x="363.95" y="154.10" width="3.1" height="2.1" fill="#fff"/><rect x="367.95" y="154.10" width="3.1" height="2.1" fill="#fff"/><rect x="359.95" y="156.75" width="3.1" height="2.1" fill="#fff"/><rect x="363.95" y="156.75" width="3.1" height="2.1" fill="#fff"/><rect x="367.95" y="156.75" width="3.1" height="2.1" fill="#fff"/><rect x="374.30" y="184.40" width="13" height="11.4" fill="#8b8b8b"/><rect x="374.30" y="184.40" width="13" height="2.5" fill="#6c6c6c"/><rect x="375.30" y="187.70" width="3.1" height="1.9" fill="#f7f7f7"/><rect x="379.40" y="187.70" width="3.1" height="1.9" fill="#f7f7f7"/><rect x="375.30" y="190.35" width="3.1" height="1.9" fill="#f7f7f7"/><rect x="379.40" y="190.35" width="3.1" height="1.9" fill="#f7f7f7"/><rect x="375.30" y="193.00" width="3.1" height="1.9" fill="#f7f7f7"/><rect x="379.40" y="193.00" width="3.1" height="1.9" fill="#f7f7f7"/><rect x="383.55" y="187.70" width="2.7" height="7.2" fill="#fff"/><rect x="374.30" y="215.60" width="13" height="11.4" fill="#8b8b8b"/><rect x="374.30" y="215.60" width="13" height="2.5" fill="#6c6c6c"/><rect x="375.30" y="218.90" width="3.1" height="1.9" fill="#f7f7f7"/><rect x="379.40" y="218.90" width="3.1" height="1.9" fill="#f7f7f7"/><rect x="375.30" y="221.55" width="3.1" height="1.9" fill="#f7f7f7"/><rect x="379.40" y="221.55" width="3.1" height="1.9" fill="#f7f7f7"/><rect x="375.30" y="224.20" width="3.1" height="1.9" fill="#f7f7f7"/><rect x="379.40" y="224.20" width="3.1" height="1.9" fill="#f7f7f7"/><rect x="383.55" y="218.90" width="2.7" height="7.2" fill="#fff"/><rect x="661.00" y="149.00" width="13" height="11.6" fill="#8e8e8e"/><rect x="661.00" y="149.00" width="13" height="2.7" fill="#6c6c6c"/><rect x="661.95" y="152.45" width="3.1" height="2.1" fill="#fff"/><rect x="665.95" y="152.45" width="3.1" height="2.1" fill="#fff"/><rect x="669.95" y="152.45" width="3.1" height="2.1" fill="#fff"/><rect x="661.95" y="155.10" width="3.1" height="2.1" fill="#fff"/><rect x="665.95" y="155.10" width="3.1" height="2.1" fill="#fff"/><rect x="669.95" y="155.10" width="3.1" height="2.1" fill="#fff"/><rect x="661.95" y="157.75" width="3.1" height="2.1" fill="#fff"/><rect x="665.95" y="157.75" width="3.1" height="2.1" fill="#fff"/><rect x="669.95" y="157.75" width="3.1" height="2.1" fill="#fff"/><rect x="677.00" y="185.20" width="13" height="11.4" fill="#8b8b8b"/><rect x="677.00" y="185.20" width="13" height="2.5" fill="#6c6c6c"/><rect x="678.00" y="188.50" width="3.1" height="1.9" fill="#f7f7f7"/><rect x="682.10" y="188.50" width="3.1" height="1.9" fill="#f7f7f7"/><rect x="678.00" y="191.15" width="3.1" height="1.9" fill="#f7f7f7"/><rect x="682.10" y="191.15" width="3.1" height="1.9" fill="#f7f7f7"/><rect x="678.00" y="193.80" width="3.1" height="1.9" fill="#f7f7f7"/><rect x="682.10" y="193.80" width="3.1" height="1.9" fill="#f7f7f7"/><rect x="686.25" y="188.50" width="2.7" height="7.2" fill="#fff"/><rect x="677.00" y="216.40" width="13" height="11.4" fill="#8b8b8b"/><rect x="677.00" y="216.40" width="13" height="2.5" fill="#6c6c6c"/><rect x="678.00" y="219.70" width="3.1" height="1.9" fill="#f7f7f7"/><rect x="682.10" y="219.70" width="3.1" height="1.9" fill="#f7f7f7"/><rect x="678.00" y="222.35" width="3.1" height="1.9" fill="#f7f7f7"/><rect x="682.10" y="222.35" width="3.1" height="1.9" fill="#f7f7f7"/><rect x="678.00" y="225.00" width="3.1" height="1.9" fill="#f7f7f7"/><rect x="682.10" y="225.00" width="3.1" height="1.9" fill="#f7f7f7"/><rect x="686.25" y="219.70" width="2.7" height="7.2" fill="#fff"/><rect x="677.00" y="247.60" width="13" height="11.4" fill="#8b8b8b"/><rect x="677.00" y="247.60" width="13" height="2.5" fill="#6c6c6c"/><rect x="678.00" y="250.90" width="3.1" height="1.9" fill="#f7f7f7"/><rect x="682.10" y="250.90" width="3.1" height="1.9" fill="#f7f7f7"/><rect x="678.00" y="253.55" width="3.1" height="1.9" fill="#f7f7f7"/><rect x="682.10" y="253.55" width="3.1" height="1.9" fill="#f7f7f7"/><rect x="678.00" y="256.20" width="3.1" height="1.9" fill="#f7f7f7"/><rect x="682.10" y="256.20" width="3.1" height="1.9" fill="#f7f7f7"/><rect x="686.25" y="250.90" width="2.7" height="7.2" fill="#fff"/><rect x="677.00" y="278.80" width="13" height="11.4" fill="#8b8b8b"/><rect x="677.00" y="278.80" width="13" height="2.5" fill="#6c6c6c"/><rect x="678.00" y="282.10" width="3.1" height="1.9" fill="#f7f7f7"/><rect x="682.10" y="282.10" width="3.1" height="1.9" fill="#f7f7f7"/><rect x="678.00" y="284.75" width="3.1" height="1.9" fill="#f7f7f7"/><rect x="682.10" y="284.75" width="3.1" height="1.9" fill="#f7f7f7"/><rect x="678.00" y="287.40" width="3.1" height="1.9" fill="#f7f7f7"/><rect x="682.10" y="287.40" width="3.1" height="1.9" fill="#f7f7f7"/><rect x="686.25" y="282.10" width="2.7" height="7.2" fill="#fff"/><rect x="677.00" y="310.00" width="13" height="11.4" fill="#8b8b8b"/><rect x="677.00" y="310.00" width="13" height="2.5" fill="#6c6c6c"/><rect x="678.00" y="313.30" width="3.1" height="1.9" fill="#f7f7f7"/><rect x="682.10" y="313.30" width="3.1" height="1.9" fill="#f7f7f7"/><rect x="678.00" y="315.95" width="3.1" height="1.9" fill="#f7f7f7"/><rect x="682.10" y="315.95" width="3.1" height="1.9" fill="#f7f7f7"/><rect x="678.00" y="318.60" width="3.1" height="1.9" fill="#f7f7f7"/><rect x="682.10" y="318.60" width="3.1" height="1.9" fill="#f7f7f7"/><rect x="686.25" y="313.30" width="2.7" height="7.2" fill="#fff"/><rect x="677.00" y="341.20" width="13" height="11.4" fill="#8b8b8b"/><rect x="677.00" y="341.20" width="13" height="2.5" fill="#6c6c6c"/><rect x="678.00" y="344.50" width="3.1" height="1.9" fill="#f7f7f7"/><rect x="682.10" y="344.50" width="3.1" height="1.9" fill="#f7f7f7"/><rect x="678.00" y="347.15" width="3.1" height="1.9" fill="#f7f7f7"/><rect x="682.10" y="347.15" width="3.1" height="1.9" fill="#f7f7f7"/><rect x="678.00" y="349.80" width="3.1" height="1.9" fill="#f7f7f7"/><rect x="682.10" y="349.80" width="3.1" height="1.9" fill="#f7f7f7"/><rect x="686.25" y="344.50" width="2.7" height="7.2" fill="#fff"/><rect x="677.00" y="372.40" width="13" height="11.4" fill="#8b8b8b"/><rect x="677.00" y="372.40" width="13" height="2.5" fill="#6c6c6c"/><rect x="678.00" y="375.70" width="3.1" height="1.9" fill="#f7f7f7"/><rect x="682.10" y="375.70" width="3.1" height="1.9" fill="#f7f7f7"/><rect x="678.00" y="378.35" width="3.1" height="1.9" fill="#f7f7f7"/><rect x="682.10" y="378.35" width="3.1" height="1.9" fill="#f7f7f7"/><rect x="678.00" y="381.00" width="3.1" height="1.9" fill="#f7f7f7"/><rect x="682.10" y="381.00" width="3.1" height="1.9" fill="#f7f7f7"/><rect x="686.25" y="375.70" width="2.7" height="7.2" fill="#fff"/><rect x="677.00" y="403.60" width="13" height="11.4" fill="#8b8b8b"/><rect x="677.00" y="403.60" width="13" height="2.5" fill="#6c6c6c"/><rect x="678.00" y="406.90" width="3.1" height="1.9" fill="#f7f7f7"/><rect x="682.10" y="406.90" width="3.1" height="1.9" fill="#f7f7f7"/><rect x="678.00" y="409.55" width="3.1" height="1.9" fill="#f7f7f7"/><rect x="682.10" y="409.55" width="3.1" height="1.9" fill="#f7f7f7"/><rect x="678.00" y="412.20" width="3.1" height="1.9" fill="#f7f7f7"/><rect x="682.10" y="412.20" width="3.1" height="1.9" fill="#f7f7f7"/><rect x="686.25" y="406.90" width="2.7" height="7.2" fill="#fff"/><rect x="677.00" y="434.80" width="13" height="11.4" fill="#8b8b8b"/><rect x="677.00" y="434.80" width="13" height="2.5" fill="#6c6c6c"/><rect x="678.00" y="438.10" width="3.1" height="1.9" fill="#f7f7f7"/><rect x="682.10" y="438.10" width="3.1" height="1.9" fill="#f7f7f7"/><rect x="678.00" y="440.75" width="3.1" height="1.9" fill="#f7f7f7"/><rect x="682.10" y="440.75" width="3.1" height="1.9" fill="#f7f7f7"/><rect x="678.00" y="443.40" width="3.1" height="1.9" fill="#f7f7f7"/><rect x="682.10" y="443.40" width="3.1" height="1.9" fill="#f7f7f7"/><rect x="686.25" y="438.10" width="2.7" height="7.2" fill="#fff"/><rect x="677.00" y="466.00" width="13" height="11.4" fill="#8b8b8b"/><rect x="677.00" y="466.00" width="13" height="2.5" fill="#6c6c6c"/><rect x="678.00" y="469.30" width="3.1" height="1.9" fill="#f7f7f7"/><rect x="682.10" y="469.30" width="3.1" height="1.9" fill="#f7f7f7"/><rect x="678.00" y="471.95" width="3.1" height="1.9" fill="#f7f7f7"/><rect x="682.10" y="471.95" width="3.1" height="1.9" fill="#f7f7f7"/><rect x="678.00" y="474.60" width="3.1" height="1.9" fill="#f7f7f7"/><rect x="682.10" y="474.60" width="3.1" height="1.9" fill="#f7f7f7"/><rect x="686.25" y="469.30" width="2.7" height="7.2" fill="#fff"/><rect x="677.00" y="497.20" width="13" height="11.4" fill="#8b8b8b"/><rect x="677.00" y="497.20" width="13" height="2.5" fill="#6c6c6c"/><rect x="678.00" y="500.50" width="3.1" height="1.9" fill="#f7f7f7"/><rect x="682.10" y="500.50" width="3.1" height="1.9" fill="#f7f7f7"/><rect x="678.00" y="503.15" width="3.1" height="1.9" fill="#f7f7f7"/><rect x="682.10" y="503.15" width="3.1" height="1.9" fill="#f7f7f7"/><rect x="678.00" y="505.80" width="3.1" height="1.9" fill="#f7f7f7"/><rect x="682.10" y="505.80" width="3.1" height="1.9" fill="#f7f7f7"/><rect x="686.25" y="500.50" width="2.7" height="7.2" fill="#fff"/><rect x="677.00" y="528.40" width="13" height="11.4" fill="#8b8b8b"/><rect x="677.00" y="528.40" width="13" height="2.5" fill="#6c6c6c"/><rect x="678.00" y="531.70" width="3.1" height="1.9" fill="#f7f7f7"/><rect x="682.10" y="531.70" width="3.1" height="1.9" fill="#f7f7f7"/><rect x="678.00" y="534.35" width="3.1" height="1.9" fill="#f7f7f7"/><rect x="682.10" y="534.35" width="3.1" height="1.9" fill="#f7f7f7"/><rect x="678.00" y="537.00" width="3.1" height="1.9" fill="#f7f7f7"/><rect x="682.10" y="537.00" width="3.1" height="1.9" fill="#f7f7f7"/><rect x="686.25" y="531.70" width="2.7" height="7.2" fill="#fff"/><rect x="677.00" y="559.60" width="13" height="11.4" fill="#8b8b8b"/><rect x="677.00" y="559.60" width="13" height="2.5" fill="#6c6c6c"/><rect x="678.00" y="562.90" width="3.1" height="1.9" fill="#f7f7f7"/><rect x="682.10" y="562.90" width="3.1" height="1.9" fill="#f7f7f7"/><rect x="678.00" y="565.55" width="3.1" height="1.9" fill="#f7f7f7"/><rect x="682.10" y="565.55" width="3.1" height="1.9" fill="#f7f7f7"/><rect x="678.00" y="568.20" width="3.1" height="1.9" fill="#f7f7f7"/><rect x="682.10" y="568.20" width="3.1" height="1.9" fill="#f7f7f7"/><rect x="686.25" y="562.90" width="2.7" height="7.2" fill="#fff"/><rect x="677.00" y="590.80" width="13" height="11.4" fill="#8b8b8b"/><rect x="677.00" y="590.80" width="13" height="2.5" fill="#6c6c6c"/><rect x="678.00" y="594.10" width="3.1" height="1.9" fill="#f7f7f7"/><rect x="682.10" y="594.10" width="3.1" height="1.9" fill="#f7f7f7"/><rect x="678.00" y="596.75" width="3.1" height="1.9" fill="#f7f7f7"/><rect x="682.10" y="596.75" width="3.1" height="1.9" fill="#f7f7f7"/><rect x="678.00" y="599.40" width="3.1" height="1.9" fill="#f7f7f7"/><rect x="682.10" y="599.40" width="3.1" height="1.9" fill="#f7f7f7"/><rect x="686.25" y="594.10" width="2.7" height="7.2" fill="#fff"/><rect x="677.00" y="622.00" width="13" height="11.4" fill="#8b8b8b"/><rect x="677.00" y="622.00" width="13" height="2.5" fill="#6c6c6c"/><rect x="678.00" y="625.30" width="3.1" height="1.9" fill="#f7f7f7"/><rect x="682.10" y="625.30" width="3.1" height="1.9" fill="#f7f7f7"/><rect x="678.00" y="627.95" width="3.1" height="1.9" fill="#f7f7f7"/><rect x="682.10" y="627.95" width="3.1" height="1.9" fill="#f7f7f7"/><rect x="678.00" y="630.60" width="3.1" height="1.9" fill="#f7f7f7"/><rect x="682.10" y="630.60" width="3.1" height="1.9" fill="#f7f7f7"/><rect x="686.25" y="625.30" width="2.7" height="7.2" fill="#fff"/><rect x="1003.00" y="161.60" width="13" height="11.6" fill="#8e8e8e"/><rect x="1003.00" y="161.60" width="13" height="2.7" fill="#6c6c6c"/><rect x="1003.95" y="165.05" width="3.1" height="2.1" fill="#fff"/><rect x="1007.95" y="165.05" width="3.1" height="2.1" fill="#fff"/><rect x="1011.95" y="165.05" width="3.1" height="2.1" fill="#fff"/><rect x="1003.95" y="167.70" width="3.1" height="2.1" fill="#fff"/><rect x="1007.95" y="167.70" width="3.1" height="2.1" fill="#fff"/><rect x="1011.95" y="167.70" width="3.1" height="2.1" fill="#fff"/><rect x="1003.95" y="170.35" width="3.1" height="2.1" fill="#fff"/><rect x="1007.95" y="170.35" width="3.1" height="2.1" fill="#fff"/><rect x="1011.95" y="170.35" width="3.1" height="2.1" fill="#fff"/><rect x="1018.80" y="197.60" width="13" height="11.4" fill="#8b8b8b"/><rect x="1018.80" y="197.60" width="13" height="2.5" fill="#6c6c6c"/><rect x="1019.80" y="200.90" width="3.1" height="1.9" fill="#f7f7f7"/><rect x="1023.90" y="200.90" width="3.1" height="1.9" fill="#f7f7f7"/><rect x="1019.80" y="203.55" width="3.1" height="1.9" fill="#f7f7f7"/><rect x="1023.90" y="203.55" width="3.1" height="1.9" fill="#f7f7f7"/><rect x="1019.80" y="206.20" width="3.1" height="1.9" fill="#f7f7f7"/><rect x="1023.90" y="206.20" width="3.1" height="1.9" fill="#f7f7f7"/><rect x="1028.05" y="200.90" width="2.7" height="7.2" fill="#fff"/><rect x="1018.80" y="229.00" width="13" height="11.4" fill="#8b8b8b"/><rect x="1018.80" y="229.00" width="13" height="2.5" fill="#6c6c6c"/><rect x="1019.80" y="232.30" width="3.1" height="1.9" fill="#f7f7f7"/><rect x="1023.90" y="232.30" width="3.1" height="1.9" fill="#f7f7f7"/><rect x="1019.80" y="234.95" width="3.1" height="1.9" fill="#f7f7f7"/><rect x="1023.90" y="234.95" width="3.1" height="1.9" fill="#f7f7f7"/><rect x="1019.80" y="237.60" width="3.1" height="1.9" fill="#f7f7f7"/><rect x="1023.90" y="237.60" width="3.1" height="1.9" fill="#f7f7f7"/><rect x="1028.05" y="232.30" width="2.7" height="7.2" fill="#fff"/><path d="M881 181.8L884.5 178L888 181.8" fill="none" stroke="#9a9a9a" stroke-width="1.3"/><path d="M881 632.2L884.5 636L888 632.2" fill="none" stroke="#9a9a9a" stroke-width="1.3"/><path d="M561.7 206.3H596.6Q600 206.3 600 209.7V386.9Q600 390.3 603.4 390.3H638" fill="none" stroke="#6b6b6b" stroke-width="1.3"/><rect x="596" y="294.8" width="8" height="7.4" fill="#444"/><path d="M597.3 296.2H602.7L600 301Z" fill="#fff"/><rect x="1150.6" y="161.6" width="4.8" height="4" fill="#f0c069"/><rect x="1157" y="164" width="5" height="4" fill="#f0c069"/><rect x="1157" y="169" width="5" height="4" fill="#f0c069"/><rect x="1154.4" y="167" width="1.6" height="1.2" fill="#8a8a8a"/><rect x="1154.4" y="170.6" width="1.6" height="1.2" fill="#8a8a8a"/><rect x="1168.4" y="163.2" width="10.6" height="8.4" rx="1.2" fill="#fff" stroke="#c9c9c9" stroke-width="1"/><rect x="1171" y="165.4" width="5.6" height="3.8" rx="0.8" fill="#fff" stroke="#9a9a9a" stroke-width="1"/><path d="M759.4 567.8L1092.6 234.6" stroke="#000" stroke-width="2.1" stroke-linecap="round"/><circle cx="758.7" cy="567.9" r="7.55" fill="none" stroke="#2b97f0" stroke-width="5.3"/><path d="M752.2 563.3A7.55 7.55 0 0 0 751.3 569.6" fill="none" stroke="#26c4f5" stroke-width="5.3"/></svg>
</main>
</body></html>
